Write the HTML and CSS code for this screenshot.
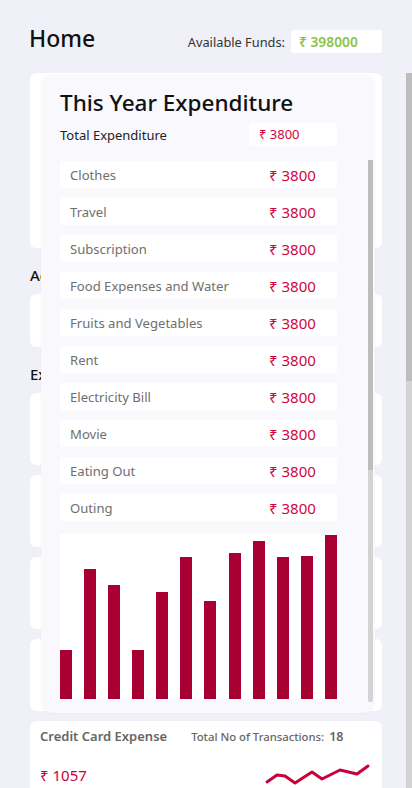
FILE: index.html
```html
<!DOCTYPE html>
<html lang="en">
<head>
<meta charset="utf-8">
<title>Home</title>
<link rel="stylesheet" href="styles.css">
</head>
<body>
<div class="app">
  <header class="topbar">
    <h1 class="page-title">Home</h1>
    <div class="funds">
      <span class="funds-label">Available Funds:</span>
      <span class="funds-value">₹ 398000</span>
    </div>
  </header>

  <div class="main-wrap">
    <main class="content">
      <section class="card card-tall"></section>
      <h2 class="section-title">Accounts</h2>
      <section class="card card-short"></section>
      <h2 class="section-title">Expenses</h2>
      <div class="card-list">
        <section class="card card-mid"></section>
        <section class="card card-mid"></section>
        <section class="card card-mid"></section>
        <section class="card card-mid"></section>
        <section class="card expense-card">
          <div class="expense-head">
            <span class="expense-name">Credit Card Expense</span>
            <span class="tx-label">Total No of Transactions:</span>
            <span class="tx-count">18</span>
          </div>
          <div class="expense-body">
            <span class="expense-amount">₹ 1057</span>
            <svg class="sparkline" width="108" height="24" viewBox="0 0 108 24">
              <polyline points="3,19 13,12 21,13 31,20 48,9 58,16 76,7 93,11 104,3" fill="none" stroke="#c8003c" stroke-width="3" stroke-linejoin="round" stroke-linecap="round"/>
            </svg>
          </div>
        </section>
      </div>
    </main>
    <div class="scrollbar"><div class="scrollbar-thumb"></div></div>
  </div>

  <div class="modal">
    <h2 class="modal-title">This Year Expenditure</h2>
    <div class="total-row">
      <span class="total-label">Total Expenditure</span>
      <span class="total-value">₹ 3800</span>
    </div>
    <div class="scroll-area">
      <div class="scroll-inner">
        <div class="row"><span class="row-label">Clothes</span><span class="row-amount">₹ 3800</span></div>
        <div class="row"><span class="row-label">Travel</span><span class="row-amount">₹ 3800</span></div>
        <div class="row"><span class="row-label">Subscription</span><span class="row-amount">₹ 3800</span></div>
        <div class="row"><span class="row-label">Food Expenses and Water</span><span class="row-amount">₹ 3800</span></div>
        <div class="row"><span class="row-label">Fruits and Vegetables</span><span class="row-amount">₹ 3800</span></div>
        <div class="row"><span class="row-label">Rent</span><span class="row-amount">₹ 3800</span></div>
        <div class="row"><span class="row-label">Electricity Bill</span><span class="row-amount">₹ 3800</span></div>
        <div class="row"><span class="row-label">Movie</span><span class="row-amount">₹ 3800</span></div>
        <div class="row"><span class="row-label">Eating Out</span><span class="row-amount">₹ 3800</span></div>
        <div class="row"><span class="row-label">Outing</span><span class="row-amount">₹ 3800</span></div>
        <div class="chart">
          <div class="bar" style="height:49px"></div>
          <div class="bar" style="height:130px"></div>
          <div class="bar" style="height:114px"></div>
          <div class="bar" style="height:49px"></div>
          <div class="bar" style="height:107px"></div>
          <div class="bar" style="height:142px"></div>
          <div class="bar" style="height:98px"></div>
          <div class="bar" style="height:146px"></div>
          <div class="bar" style="height:158px"></div>
          <div class="bar" style="height:142px"></div>
          <div class="bar" style="height:143px"></div>
          <div class="bar" style="height:164px"></div>
        </div>
      </div>
      <div class="modal-scrollbar"><div class="modal-scrollbar-thumb"></div></div>
    </div>
  </div>
</div>
</body>
</html>
```

FILE: styles.css
```css
html, body {
  margin: 0;
  padding: 0;
}

body {
  background: #f0f0f8;
  font-family: "Noto Sans", "Open Sans", sans-serif;
  color: #111;
}

.app {
  position: relative;
  width: 412px;
  height: 788px;
  overflow: hidden;
}

/* header */
.topbar {
  height: 73px;
  box-sizing: border-box;
  display: flex;
  justify-content: space-between;
  align-items: flex-start;
  padding: 22px 30px 0 29px;
}

.page-title {
  margin: 0;
  font-size: 23px;
  line-height: 32px;
  font-weight: 500;
  color: #111;
}

.funds {
  display: flex;
  align-items: center;
  margin-top: 8px;
}

.funds-label {
  font-size: 12.8px;
  color: #333;
  margin-right: 6px;
}

.funds-value {
  width: 91px;
  height: 23px;
  box-sizing: border-box;
  padding-left: 8px;
  background: #fff;
  border-radius: 3px;
  color: #8bc34a;
  font-size: 13.8px;
  font-weight: 600;
  line-height: 23px;
}

/* main scroll area */
.main-wrap {
  display: flex;
  height: 715px;
}

.content {
  flex: 1;
  overflow: hidden;
  padding: 0 24px 0 30px;
}

.scrollbar {
  width: 6px;
  background: #d3d3d3;
}

.scrollbar-thumb {
  height: 308px;
  background: #bdbdbd;
}

.card {
  background: #fff;
  border-radius: 6px;
}

.card-tall {
  height: 175px;
}

.card-short {
  height: 53px;
}

.card-mid {
  height: 72px;
}

.section-title {
  margin: 0;
  padding: 17px 0 9px;
  font-size: 15px;
  line-height: 20px;
  font-weight: 500;
  color: #111;
}

.card-list {
  display: flex;
  flex-direction: column;
  gap: 10px;
}

.expense-card {
  padding: 6px 10px 10px;
  height: 90px;
  box-sizing: border-box;
}

.expense-head {
  display: flex;
  align-items: baseline;
}

.expense-name {
  font-size: 13px;
  font-weight: 600;
  color: #666;
}

.tx-label {
  margin-left: 24px;
  font-size: 11.3px;
  font-weight: 500;
  color: #666;
}

.tx-count {
  margin-left: 5px;
  font-size: 12.5px;
  font-weight: 600;
  color: #666;
}

.expense-body {
  display: flex;
  justify-content: space-between;
  align-items: center;
  height: 24px;
  margin-top: 18px;
}

.expense-amount {
  font-size: 15px;
  color: #c8003c;
}

/* modal */
.modal {
  position: absolute;
  left: 41px;
  top: 75px;
  width: 334px;
  height: 638px;
  box-sizing: border-box;
  padding: 12px 2px 0 19px;
  background: #f8f8fd;
  border-radius: 12px;
  box-shadow: 0 0 2px rgba(40, 40, 80, 0.06);
}

.modal-title {
  margin: 0;
  font-size: 22.5px;
  line-height: 32px;
  font-weight: 500;
  color: #111;
}

.total-row {
  width: 277px;
  height: 23px;
  margin-top: 4px;
  display: flex;
  justify-content: space-between;
  align-items: center;
}

.total-label {
  font-size: 13px;
  color: #222;
}

.total-value {
  width: 88px;
  height: 23px;
  box-sizing: border-box;
  padding-left: 10px;
  background: #fff;
  border-radius: 3px;
  color: #d0063f;
  font-size: 13px;
  line-height: 23px;
}

.scroll-area {
  margin-top: 14px;
  height: 542px;
  overflow: hidden;
  display: flex;
  justify-content: space-between;
}

.scroll-inner {
  width: 277px;
  padding-top: 1px;
  display: flex;
  flex-direction: column;
  gap: 10px;
}

.modal-scrollbar {
  width: 5px;
  height: 542px;
  background: #d3d3d3;
  border-radius: 0 0 2px 2px;
}

.modal-scrollbar-thumb {
  height: 310px;
  background: #bdbdbd;
}

.row {
  height: 27px;
  flex: none;
  display: flex;
  justify-content: space-between;
  align-items: center;
  padding-left: 10px;
  background: #fff;
  border-radius: 2px;
}

.row-label {
  font-size: 13.1px;
  color: #6f6f6f;
}

.row-amount {
  width: 68px;
  font-size: 15px;
  color: #d0063f;
}

.chart {
  height: 165px;
  flex: none;
  margin-top: 3px;
  background: #fff;
  display: flex;
  align-items: flex-end;
  justify-content: space-between;
}

.bar {
  width: 12px;
  background: #a80032;
}
```
